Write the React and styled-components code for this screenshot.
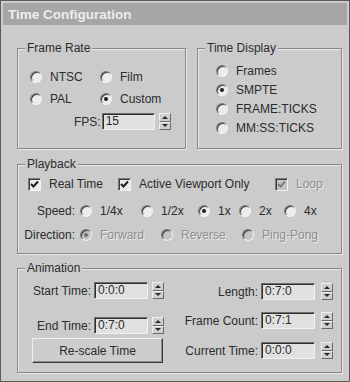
import React from 'react';
import styled, { createGlobalStyle } from 'styled-components';

const bg = '#cbcbcb';
const textColor = '#2b2b2b';
const disabledColor = '#8e8e8e';

const GlobalStyle = createGlobalStyle`
  html, body {
    margin: 0;
    padding: 0;
    background: ${bg};
  }
  body {
    font-family: "Liberation Sans", Arial, sans-serif;
    font-size: 12px;
    color: ${textColor};
  }
`;

// Window chrome

const Window = styled.div`
  width: 350px;
  height: 382px;
  box-sizing: border-box;
  border: 1px solid #5c5c5c;
  padding: 2px;
  background: ${bg};
  display: flex;
  flex-direction: column;
`;

const TitleBar = styled.div`
  height: 22px;
  flex: none;
  display: flex;
  align-items: center;
  padding-left: 5px;
  background: #a6a6a6;
  color: #ececec;
  font-weight: bold;
  font-size: 13.5px;
`;

const Content = styled.div`
  padding: 23px 5px 0 14px;
  display: flex;
  flex-direction: column;
`;

const TopRow = styled.div`
  display: flex;
  gap: 11px;
`;

// Group boxes

const Group = styled.div`
  position: relative;
  box-sizing: border-box;
  width: ${p => p.$w || 325}px;
  height: ${p => p.$h}px;
  margin-top: ${p => p.$mt || 0}px;
  padding: ${p => p.$pad};
  border: 1px solid #878787;
  box-shadow: inset 1px 1px 0 #e9e9e9, 1px 1px 0 #e9e9e9;
`;

const Legend = styled.span`
  position: absolute;
  top: -8px;
  left: 7px;
  padding: 0 2px;
  line-height: 14px;
  background: ${bg};
`;

// Radios and checks

const Option = styled.label`
  display: flex;
  align-items: center;
  gap: 8px;
  height: ${p => p.$h || 16}px;
  width: ${p => (p.$w ? `${p.$w}px` : 'auto')};
  flex: none;
  white-space: nowrap;
  color: ${p => (p.$disabled ? disabledColor : textColor)};
  text-shadow: ${p => (p.$disabled ? '1px 1px 0 #ececec' : 'none')};
`;

const RadioDot = styled.span`
  position: relative;
  width: 12px;
  height: 12px;
  box-sizing: border-box;
  flex: none;
  border-radius: 50%;
  border: 1px solid;
  border-color: #7a7a7a #f2f2f2 #f2f2f2 #7a7a7a;
  box-shadow: inset 1px 1px 0 #3c3c3c;
  background: ${p => (p.$disabled ? '#c4c4c4' : '#ececec')};
  &::after {
    content: '';
    display: ${p => (p.$checked ? 'block' : 'none')};
    position: absolute;
    left: 3px;
    top: 3px;
    width: 4px;
    height: 4px;
    border-radius: 50%;
    background: ${p => (p.$disabled ? '#6e6e6e' : '#1e1e1e')};
  }
`;

const CheckBox = styled.span`
  width: 13px;
  height: 13px;
  box-sizing: border-box;
  flex: none;
  display: flex;
  align-items: center;
  justify-content: center;
  border: 1px solid;
  border-color: #7a7a7a #f2f2f2 #f2f2f2 #7a7a7a;
  box-shadow: inset 1px 1px 0 #3c3c3c;
  background: ${p => (p.$disabled ? '#c4c4c4' : '#ececec')};
  color: ${p => (p.$disabled ? '#7c7c7c' : '#1e1e1e')};
`;

const Radio = ({ label, checked, disabled, w, h }) => (
  <Option $w={w} $h={h} $disabled={disabled}>
    <RadioDot $checked={checked} $disabled={disabled} />
    {label}
  </Option>
);

const Check = ({ label, disabled, w }) => (
  <Option $w={w} $disabled={disabled}>
    <CheckBox $disabled={disabled}>
      <svg width="9" height="9" viewBox="0 0 9 9">
        <polyline points="1,4 3.5,6.5 8,1.5" fill="none" stroke="currentColor" strokeWidth="2" />
      </svg>
    </CheckBox>
    {label}
  </Option>
);

// Frame rate

const RadioGrid = styled.div`
  display: grid;
  grid-template-columns: ${p => p.$cols};
  grid-auto-rows: ${p => p.$row}px;
  align-items: center;
`;

const FieldRow = styled.div`
  display: flex;
  align-items: center;
  height: 17px;
  margin-top: ${p => p.$mt || 0}px;
  margin-left: ${p => p.$ml || 0}px;
  justify-content: ${p => (p.$end ? 'flex-end' : 'flex-start')};
`;

const FieldLabel = styled.span`
  margin-right: ${p => (p.$gap != null ? p.$gap : 3)}px;
  white-space: nowrap;
  ${p => p.$w && `width: ${p.$w}px; text-align: right;`}
`;

const TextBox = styled.div`
  width: ${p => p.$w || 54}px;
  height: 17px;
  box-sizing: border-box;
  flex: none;
  padding: 1px 0 0 3px;
  line-height: 13px;
  border: 1px solid;
  border-color: #6e6e6e #f0f0f0 #f0f0f0 #6e6e6e;
  box-shadow: inset 1px 1px 0 #2e2e2e;
  background: #e1e1e1;
`;

const Spinner = styled.div`
  width: 12px;
  height: 17px;
  margin-left: ${p => p.$gap || 4}px;
  flex: none;
  display: flex;
  flex-direction: column;
`;

const SpinHalf = styled.div`
  flex: 1;
  box-sizing: border-box;
  display: flex;
  align-items: center;
  justify-content: center;
  border: 1px solid;
  border-color: #f0f0f0 #6a6a6a #6a6a6a #f0f0f0;
  background: #cfcfcf;
  &::after {
    content: '';
    width: 0;
    height: 0;
    border-left: 3px solid transparent;
    border-right: 3px solid transparent;
    ${p => (p.$down ? 'border-top: 3px solid #2a2a2a;' : 'border-bottom: 3px solid #2a2a2a;')}
  }
`;

const Spin = ({ gap }) => (
  <Spinner $gap={gap}>
    <SpinHalf />
    <SpinHalf $down />
  </Spinner>
);

// Playback

const OptionRow = styled.div`
  display: flex;
  align-items: center;
  height: 16px;
  margin-top: ${p => p.$mt || 0}px;
  padding-left: ${p => p.$pl || 0}px;
`;

const RowLabel = styled.span`
  width: 52px;
  margin-right: 5px;
  text-align: right;
  white-space: nowrap;
  flex: none;
`;

// Animation

const AnimBody = styled.div`
  display: flex;
  justify-content: space-between;
`;

const Column = styled.div`
  display: flex;
  flex-direction: column;
  width: ${p => p.$w}px;
  padding-top: ${p => p.$pt || 0}px;
`;

const Button = styled.div`
  height: 25px;
  box-sizing: border-box;
  margin-top: 4px;
  width: 131px;
  display: flex;
  align-items: center;
  justify-content: center;
  border: 1px solid;
  border-color: #f0f0f0 #3a3a3a #3a3a3a #f0f0f0;
  box-shadow: inset -1px -1px 0 #8a8a8a;
  background: #cdcdcd;
`;

const TimeField = ({ label, value, labelW, mt, gap, end }) => (
  <FieldRow $mt={mt} $end={end}>
    <FieldLabel $w={labelW}>{label}</FieldLabel>
    <TextBox>{value}</TextBox>
    <Spin gap={gap} />
  </FieldRow>
);

export default function App() {
  return (
    <>
      <GlobalStyle />
      <Window>
        <TitleBar>Time Configuration</TitleBar>
        <Content>
          <TopRow>
            <Group $w={169} $h={101} $pad="17px 0 0 12px">
              <Legend>Frame Rate</Legend>
              <RadioGrid $cols="70px 70px" $row={22}>
                <Radio label="NTSC" />
                <Radio label="Film" />
                <Radio label="PAL" />
                <Radio label="Custom" checked />
              </RadioGrid>
              <FieldRow $mt={3} $ml={44}>
                <FieldLabel $gap={1}>FPS:</FieldLabel>
                <TextBox $w={53}>15</TextBox>
                <Spin />
              </FieldRow>
            </Group>
            <Group $w={145} $h={101} $pad="12px 0 0 18px">
              <Legend>Time Display</Legend>
              <RadioGrid $cols="auto" $row={19}>
                <Radio label="Frames" />
                <Radio label="SMPTE" checked />
                <Radio label="FRAME:TICKS" />
                <Radio label="MM:SS:TICKS" />
              </RadioGrid>
            </Group>
          </TopRow>

          <Group $h={90} $mt={15} $pad="11px 0 0 5px">
            <Legend>Playback</Legend>
            <OptionRow $pl={5}>
              <Check label="Real Time" w={90} />
              <Check label="Active Viewport Only" w={157} />
              <Check label="Loop" disabled />
            </OptionRow>
            <OptionRow $mt={11}>
              <RowLabel>Speed:</RowLabel>
              <Radio label="1/4x" w={61} />
              <Radio label="1/2x" w={57} />
              <Radio label="1x" w={41} checked />
              <Radio label="2x" w={45} />
              <Radio label="4x" />
            </OptionRow>
            <OptionRow $mt={8}>
              <RowLabel>Direction:</RowLabel>
              <Radio label="Forward" w={81} checked disabled />
              <Radio label="Reverse" w={81} disabled />
              <Radio label="Ping-Pong" disabled />
            </OptionRow>
          </Group>

          <Group $h={105} $mt={14} $pad="13px 8px 0 14px">
            <Legend>Animation</Legend>
            <AnimBody>
              <Column $w={132}>
                <TimeField label="Start Time:" value="0:0:0" end />
                <TimeField label="End Time:" value="0:7:0" mt={18} end />
                <Button>Re-scale Time</Button>
              </Column>
              <Column $w={150} $pt={1}>
                <TimeField label="Length:" value="0:7:0" gap={6} end />
                <TimeField label="Frame Count:" value="0:7:1" mt={12} gap={6} end />
                <TimeField label="Current Time:" value="0:0:0" mt={13} gap={6} end />
              </Column>
            </AnimBody>
          </Group>
        </Content>
      </Window>
    </>
  );
}
